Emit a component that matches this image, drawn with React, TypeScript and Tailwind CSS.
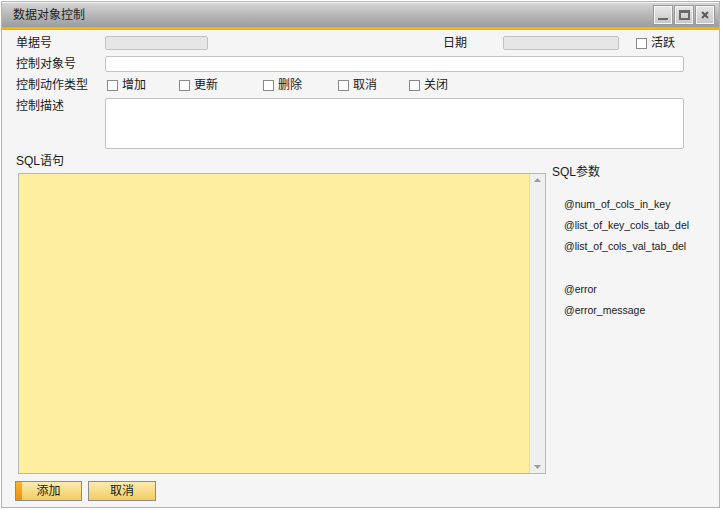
import React from "react";

const cn = "font-['Liberation_Sans','Noto_Sans_CJK_SC',sans-serif]";

function Check({ label, className = "" }: { label: string; className?: string }) {
  return (
    <div className={`flex items-center gap-[4px] ${className}`}>
      <div className="w-[11px] h-[11px] bg-white border border-[#8a8a8a]" />
      <span>{label}</span>
    </div>
  );
}

function WinBtn({ children }: { children: React.ReactNode }) {
  return (
    <div className="w-[18px] h-[18px] border border-[#f4f4f4] outline outline-1 outline-[#9a9a9a] bg-gradient-to-b from-[#e6e6e6] to-[#c8c8c8] flex items-center justify-center">
      {children}
    </div>
  );
}

export default function App() {
  const params = ["@num_of_cols_in_key", "@list_of_key_cols_tab_del", "@list_of_cols_val_tab_del"];
  return (
    <div className={`w-[722px] h-[510px] bg-white pt-[1px] pl-[1px] pr-[2px] pb-[2px] text-[12px] text-[#1a1a1a] ${cn}`}>
      <div className="w-full h-full border border-[#b4b4b4] flex flex-col bg-[#f5f5f5]">
        {/* title bar */}
        <div className="h-[24px] mt-[1px] bg-gradient-to-b from-[#d4d4d4] to-[#9c9c9c] flex items-center pl-[11px] pr-[5px]">
          <span className="text-[12px] text-[#1e1e1e] flex-1">数据对象控制</span>
          <div className="flex gap-[3px] items-center">
            <WinBtn>
              <div className="w-[10px] h-[2px] bg-[#6a6a6a] mt-[8px]" />
            </WinBtn>
            <WinBtn>
              <div className="w-[11px] h-[10px] border-[2px] border-[#6a6a6a] border-t-[3px]" />
            </WinBtn>
            <WinBtn>
              <svg width="10" height="10" viewBox="0 0 10 10">
                <path d="M2 2 L8 8 M8 2 L2 8" stroke="#5a5a5a" strokeWidth="2" />
              </svg>
            </WinBtn>
          </div>
        </div>
        <div className="h-[3px] bg-[#f4b400]" />

        {/* form */}
        <div className="flex-1 flex flex-col pl-[14px]">
          <div className="flex items-center h-[14px] mt-[6px]">
            <span className="w-[89px]">单据号</span>
            <div className="w-[103px] h-[14px] bg-[#e6e6e6] border border-[#c2c2c2] rounded-[2px]" />
            <span className="ml-[235px] w-[60px]">日期</span>
            <div className="w-[116px] h-[14px] bg-[#e6e6e6] border border-[#c2c2c2] rounded-[2px]" />
            <Check label="活跃" className="ml-[17px]" />
          </div>
          <div className="flex items-center h-[16px] mt-[6px]">
            <span className="w-[89px]">控制对象号</span>
            <div className="w-[579px] h-[16px] bg-white border border-[#c2c2c2] rounded-[2px]" />
          </div>
          <div className="flex items-center h-[14px] mt-[6px]">
            <span className="w-[91px]">控制动作类型</span>
            <Check label="增加" className="w-[72px]" />
            <Check label="更新" className="w-[84px]" />
            <Check label="删除" className="w-[75px]" />
            <Check label="取消" className="w-[71px]" />
            <Check label="关闭" />
          </div>
          <div className="flex h-[51px] mt-[6px]">
            <span className="w-[89px] leading-[16px]">控制描述</span>
            <div className="w-[579px] h-[51px] bg-white border border-[#c2c2c2] rounded-[2px]" />
          </div>

          <div className="flex flex-1 mt-[4px]">
            <div className="flex flex-col">
              <span className="h-[20px] leading-[16px]">SQL语句</span>
              <div className="ml-[2px] w-[528px] h-[301px] border border-[#b8b8b8] flex">
                <div className="flex-1 bg-[#feeea0]" />
                <div className="w-[16px] bg-[#efefef] border-l border-[#d8d8d8] flex flex-col items-center justify-between py-[4px]">
                  <svg width="7" height="4" viewBox="0 0 7 4"><path d="M0 4 L3.5 0 L7 4 Z" fill="#9a9a9a" /></svg>
                  <svg width="7" height="4" viewBox="0 0 7 4"><path d="M0 0 L7 0 L3.5 4 Z" fill="#9a9a9a" /></svg>
                </div>
              </div>
              <div className="flex gap-[6px] mt-[7px] -ml-[1px]">
                <div className="w-[67px] h-[20px] border border-[#8c8c8c] flex bg-gradient-to-b from-[#fdebb0] to-[#f2cc5c]">
                  <div className="w-[6px] bg-gradient-to-b from-[#f9b630] to-[#ef8f10]" />
                  <span className="flex-1 text-center leading-[18px] pr-[6px]">添加</span>
                </div>
                <div className="w-[68px] h-[20px] border border-[#8c8c8c] bg-gradient-to-b from-[#fdebb0] to-[#f2cc5c] text-center leading-[18px]">
                  取消
                </div>
              </div>
            </div>
            <div className="flex flex-col ml-[6px] pt-[11px]">
              <span className="leading-[16px]">SQL参数</span>
              <div className="flex flex-col pl-[12px] mt-[16px] text-[10.5px]">
                {params.map((p) => (
                  <span key={p} className="h-[21px] leading-[16px]">{p}</span>
                ))}
                <span className="h-[21px] leading-[16px] mt-[22px]">@error</span>
                <span className="h-[21px] leading-[16px]">@error_message</span>
              </div>
            </div>
          </div>
        </div>
      </div>
    </div>
  );
}
